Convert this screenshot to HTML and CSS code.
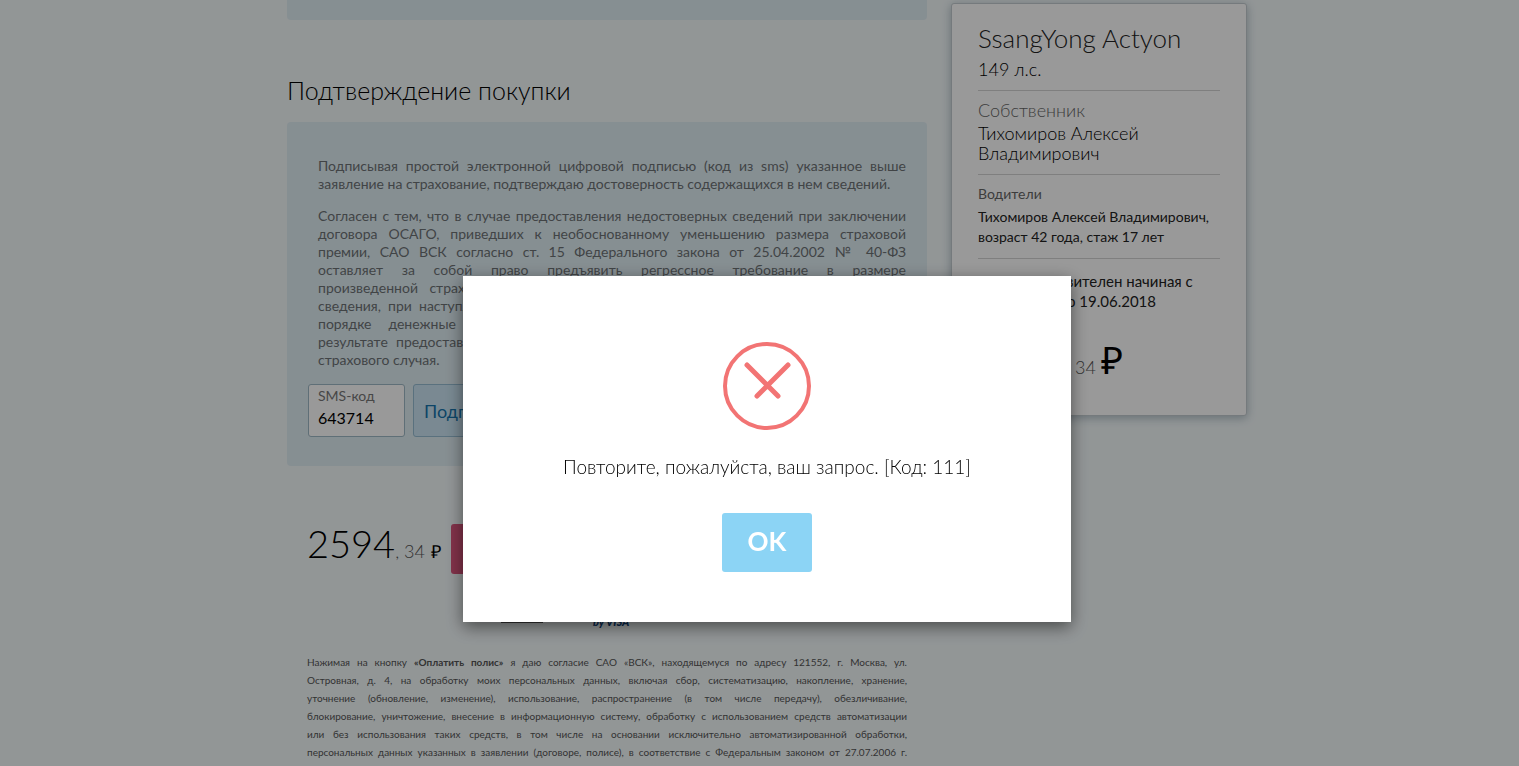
FILE: index.html
```html
<!DOCTYPE html>
<html lang="ru">
<head>
    <meta charset="UTF-8">
    <meta name="viewport" content="width=device-width, initial-scale=1.0">
    <title>Подтверждение покупки</title>
    <link rel="stylesheet" href="styles.css">
</head>
<body>
    <div class="page">
        <main class="content">
            <section class="panel panel-prev"></section>

            <h2 class="title">Подтверждение покупки</h2>
            <section class="panel">
                <div class="agreement">
                    <p>
                        <span class="line">Подписывая простой электронной цифровой подписью (код из sms) указанное выше</span>
                        <span class="line last">заявление на страхование, подтверждаю достоверность содержащихся в нем сведений.</span>
                    </p>
                    <p>
                        <span class="line">Согласен с тем, что в случае предоставления недостоверных сведений при заключении</span>
                        <span class="line">договора ОСАГО, приведших к необоснованному уменьшению размера страховой</span>
                        <span class="line">премии, САО ВСК согласно ст. 15 Федерального закона от 25.04.2002 № 40-ФЗ</span>
                        <span class="line">оставляет за собой право предъявить регрессное требование в размере</span>
                        <span class="line">произведенной страховой выплаты к лицу, предоставившему недостоверные или</span>
                        <span class="line">сведения, при наступлении страхового случая, а также взыскать в установленном им</span>
                        <span class="line">порядке денежные средства, сбереженные страхователем полностью или в</span>
                        <span class="line">результате предоставления недостоверных сведений, независимо от наступления им</span>
                        <span class="line last">страхового случая.</span>
                    </p>
                </div>
                <form class="sms">
                    <div class="sms-field">
                        <label for="sms">SMS-код</label>
                        <input type="text" id="sms" value="643714">
                    </div>
                    <button type="button" class="btn-sign">Подписать</button>
                </form>
            </section>

            <div class="pay">
                <span class="price">2594</span>
                <span class="kop">, 34</span>
                <span class="rub">₽</span>
                <button type="button" class="btn-pay">Оплатить полис</button>
            </div>

            <div class="cards">
                <span class="card-line"></span>
                <span class="visa">by VISA</span>
            </div>

            <p class="legal">
                <span class="line">Нажимая на кнопку <b>«Оплатить полис»</b> я даю согласие САО «ВСК», находящемуся по адресу 121552, г. Москва, ул.</span>
                <span class="line">Островная, д. 4, на обработку моих персональных данных, включая сбор, систематизацию, накопление, хранение,</span>
                <span class="line">уточнение (обновление, изменение), использование, распространение (в том числе передачу), обезличивание,</span>
                <span class="line">блокирование, уничтожение, внесение в информационную систему, обработку с использованием средств автоматизации</span>
                <span class="line">или без использования таких средств, в том числе на основании исключительно автоматизированной обработки,</span>
                <span class="line">персональных данных указанных в заявлении (договоре, полисе), в соответствие с Федеральным законом от 27.07.2006 г.</span>
            </p>
        </main>

        <aside class="policy">
            <div class="policy-block">
                <h3>SsangYong Actyon</h3>
                <div class="big">149 л.с.</div>
            </div>
            <div class="policy-block">
                <div class="big grey">Собственник</div>
                <div class="big">Тихомиров Алексей Владимирович</div>
            </div>
            <div class="policy-block">
                <div class="grey">Водители</div>
                <div>Тихомиров Алексей Владимирович, возраст 42 года, стаж 17 лет</div>
            </div>
            <div class="policy-block dates">Полис действителен начиная с 20.06.2017 по 19.06.2018</div>
            <div class="policy-price">
                <span class="price">2594</span>
                <span class="kop">, 34</span>
                <span class="rub-big">₽</span>
            </div>
        </aside>
    </div>

    <!-- Окно с ошибкой -->
    <div class="overlay">
        <div class="modal" role="alertdialog" aria-labelledby="modalText">
            <svg class="modal-icon" width="88" height="88" viewBox="0 0 88 88" fill="none" stroke="#f27474" stroke-width="4">
                <circle cx="44" cy="44" r="42"/>
                <path d="M24 23 L55 54 M65 23 L34 54" stroke-width="5" stroke-linecap="round"/>
            </svg>
            <p id="modalText">Повторите, пожалуйста, ваш запрос. [Код: 111]</p>
            <button type="button" class="btn-ok">OK</button>
        </div>
    </div>
</body>
</html>
```
FILE: styles.css
```css
* {
    box-sizing: border-box;
}

body {
    margin: 0;
    height: 100vh;
    overflow: hidden;
    font-family: Lato, "Open Sans", sans-serif;
    font-weight: 400;
    color: #000;
    background: #f4fafb;
}

h2, h3, p {
    margin: 0;
    font-weight: 300;
}

button, input {
    font-family: inherit;
}

.page {
    display: flex;
    justify-content: center;
    align-items: flex-start;
    gap: 24px;
    padding-left: 15px;
}

.content {
    width: 640px;
}

.panel {
    padding: 35px 21px 29px;
    border-radius: 4px;
    background: #e0eef4;
}

.panel-prev {
    height: 20px;
    padding: 0;
    border-radius: 0 0 4px 4px;
}

.title {
    padding: 54px 0 16px;
    font-size: 25px;
    line-height: 32px;
}

.line {
    display: block;
    white-space: nowrap;
    text-align: justify;
    text-align-last: justify;
}

.last {
    text-align-last: left;
}

.agreement {
    padding: 0 0 1px 10px;
    font-size: 14px;
    line-height: 18px;
    color: #6d7275;
}

.agreement p {
    margin-bottom: 14px;
    font-weight: 400;
}

/* SMS-код */
.sms {
    display: flex;
    gap: 8px;
}

.sms-field {
    display: flex;
    flex-direction: column;
    width: 97px;
    height: 53px;
    padding: 3px 9px;
    border: 1px solid #9fb9c6;
    border-radius: 3px;
    background: #fff;
}

.sms-field label {
    font-size: 14px;
    line-height: 16px;
    color: #777;
}

.sms-field input {
    width: 100%;
    height: 26px;
    padding: 0;
    border: none;
    outline: none;
    font-size: 16px;
    background: none;
}

.btn-sign {
    width: 120px;
    padding: 0 10px;
    border: 1px solid #96bdd3;
    border-radius: 3px;
    font-size: 18px;
    text-align: left;
    color: #1674ac;
    background: #cbe5f4;
}

/* Оплата */
.pay {
    display: flex;
    align-items: baseline;
    padding: 49px 20px 0;
}

.price {
    font-size: 38px;
    line-height: 56px;
    font-weight: 300;
}

.kop {
    font-size: 18px;
    font-weight: 300;
    color: #555;
}

.rub {
    margin-left: 6px;
    font-family: "Open Sans", sans-serif;
    font-size: 18px;
    font-weight: 300;
}

.btn-pay {
    align-self: flex-start;
    height: 50px;
    margin: 9px 0 0 10px;
    padding: 0 30px;
    border: none;
    border-radius: 3px;
    font-size: 18px;
    color: #fff;
    background: #d9547c;
}

.cards {
    display: flex;
    align-items: flex-end;
    gap: 50px;
    height: 54px;
    padding-left: 214px;
}

.card-line {
    width: 42px;
    height: 2px;
    margin-bottom: 5px;
    background: #555;
}

.visa {
    font-size: 11px;
    line-height: 12px;
    font-weight: 900;
    font-style: italic;
    color: #0d3f78;
}

.legal {
    padding: 25px 20px 0;
    font-size: 10px;
    font-weight: 400;
    line-height: 18px;
    color: #555;
}

/* Полис */
.policy {
    width: 296px;
    margin-top: 3px;
    padding: 19px 26px 28px;
    border: 1px solid #c3ccd0;
    border-radius: 3px;
    background: #fff;
    box-shadow: 0 2px 10px rgba(60, 90, 110, 0.4);
}

.policy-block {
    padding-bottom: 11px;
    margin-bottom: 9px;
    border-bottom: 1px solid #d4d4d4;
    font-size: 14px;
    line-height: 20px;
    color: #222;
}

.policy h3 {
    margin-bottom: 6px;
    font-size: 26px;
    line-height: 30px;
}

.big {
    font-size: 18px;
    font-weight: 300;
    color: #000;
}

.grey {
    margin-bottom: 3px;
    color: #666;
}

.policy .dates {
    padding-top: 3px;
    border: none;
    font-size: 15px;
}

.policy-price {
    display: flex;
    align-items: baseline;
}

.rub-big {
    margin-left: 5px;
    font-family: "Open Sans", sans-serif;
    font-size: 38px;
    line-height: 56px;
    font-weight: 300;
}

/* Окно */
.overlay {
    position: fixed;
    inset: 0;
    display: flex;
    justify-content: center;
    align-items: center;
    padding: 132px 0 0 15px;
    background: rgba(0, 0, 0, 0.4);
}

.modal {
    display: flex;
    flex-direction: column;
    align-items: center;
    width: 608px;
    padding: 66px 20px 50px;
    background: #fff;
    box-shadow: 0 5px 16px rgba(0, 0, 0, 0.5);
}

.modal p {
    margin: 22px 0 32px;
    font-size: 19px;
    line-height: 29px;
}

.btn-ok {
    width: 90px;
    height: 59px;
    padding: 0 0 4px;
    border: none;
    border-radius: 3px;
    font-size: 26px;
    font-weight: 700;
    color: #fff;
    background: #8cd4f5;
}
```
